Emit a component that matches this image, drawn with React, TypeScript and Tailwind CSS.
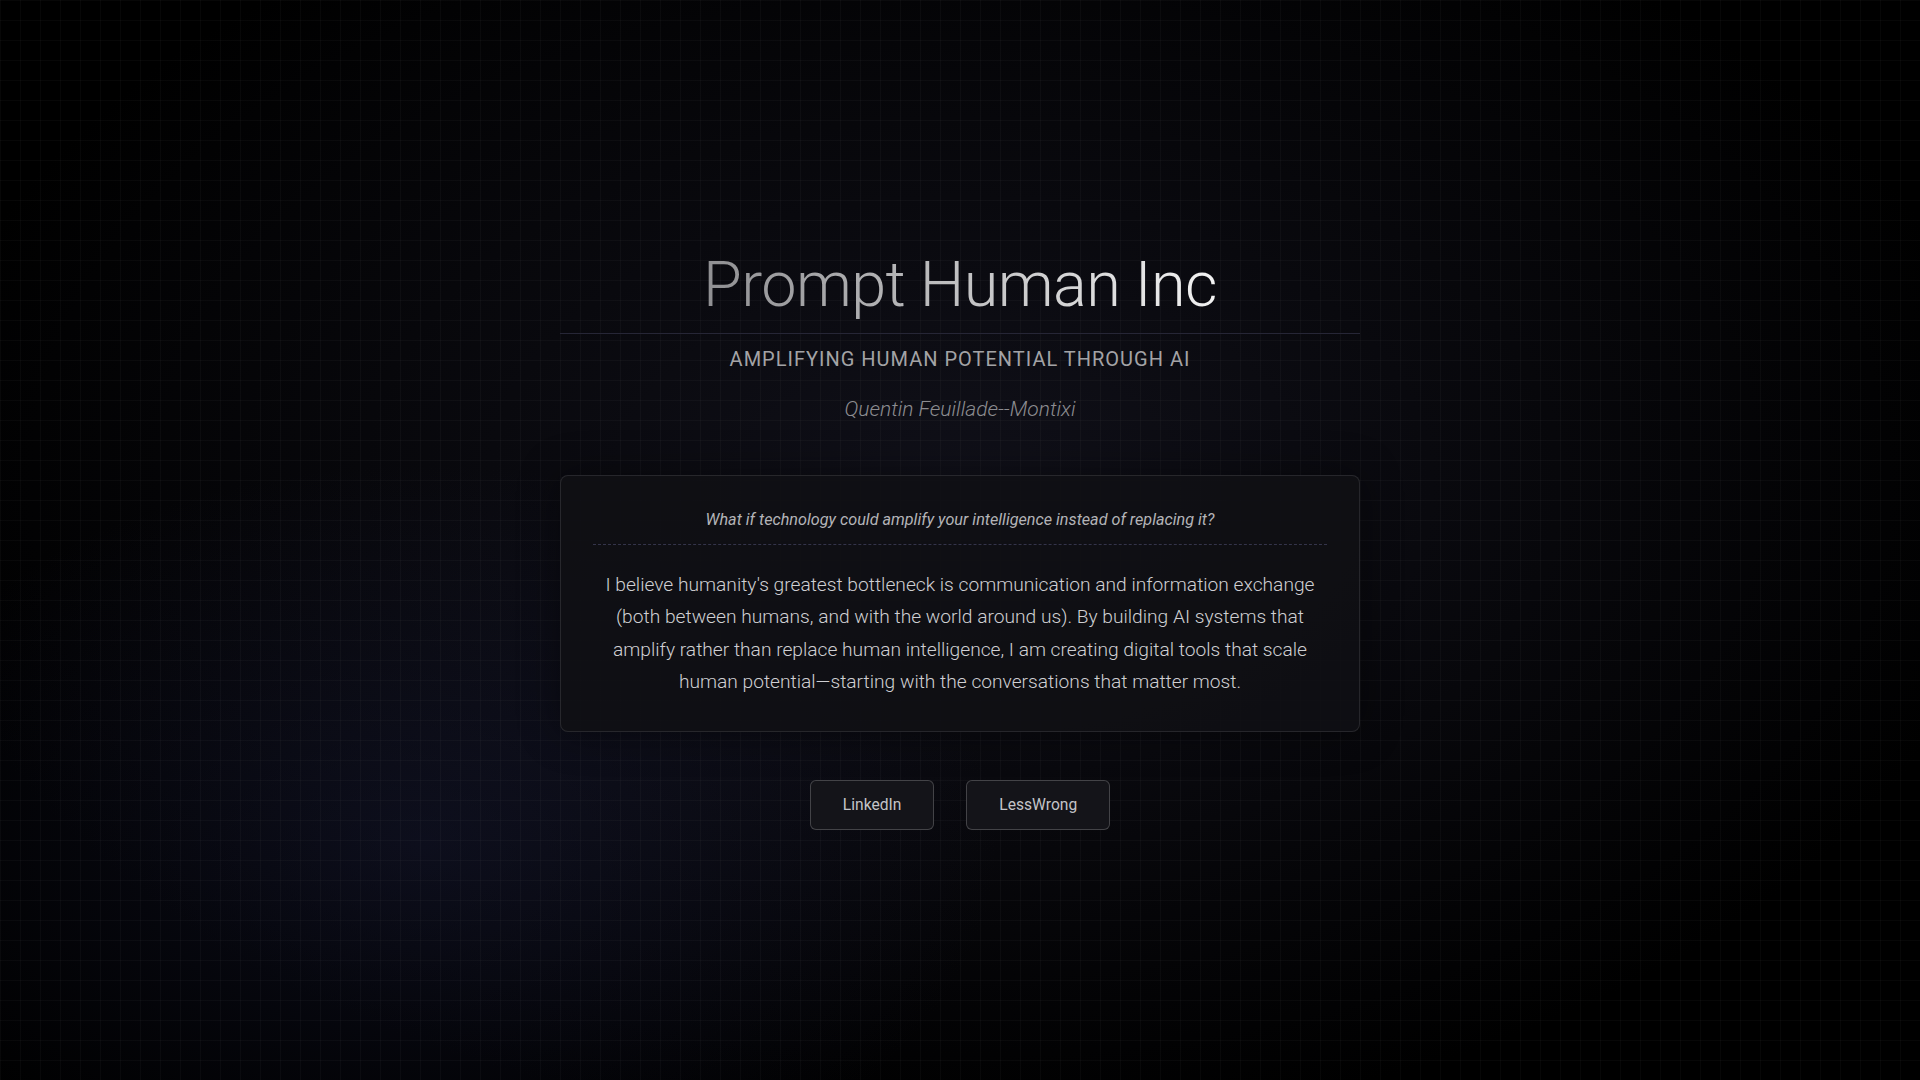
import type { ReactNode } from "react";

const links = [
  { label: "LinkedIn", href: "#" },
  { label: "LessWrong", href: "#" },
];

const LinkButton = ({ href, children }: { href: string; children: ReactNode }) => (
  <a
    href={href}
    className="rounded-md border border-white/20 bg-[#141419] px-8 py-3 text-[15.6px] leading-6 text-[#c4c4c8] hover:bg-[#1c1c22]"
  >
    {children}
  </a>
);

export default function App() {
  return (
    <div
      className="flex min-h-screen w-full flex-col items-center justify-center bg-black font-['Roboto',sans-serif] [background-image:linear-gradient(rgba(255,255,255,0.028)_1px,transparent_1px),linear-gradient(90deg,rgba(255,255,255,0.028)_1px,transparent_1px),radial-gradient(ellipse_30%_35%_at_22%_78%,rgba(30,34,70,0.35),transparent_100%),radial-gradient(ellipse_55%_60%_at_50%_45%,rgba(18,18,28,0.9),transparent_100%)] [background-size:20px_20px,20px_20px,100%_100%,100%_100%]"
    >
      <main className="flex w-[800px] flex-col items-center pb-[3px]">
        <header className="flex w-full flex-col items-center">
          <h1 className="w-full border-b border-[#262636] pb-[10px] text-center text-[63px] font-light leading-[1.2] tracking-[-0.01em]">
            <span className="bg-[linear-gradient(90deg,#8f8f92,#f2f2f2)] bg-clip-text text-transparent">Prompt Human Inc</span>
          </h1>
          <p className="mt-[11px] text-[20px] uppercase leading-7 tracking-[0.05em] text-[#a3a3a6]">
            Amplifying Human Potential Through AI
          </p>
          <p className="mt-[22px] text-[21px] font-light italic leading-7 text-[#8c8c90]">Quentin Feuillade--Montixi</p>
        </header>

        <section className="mt-[52px] w-full rounded-lg border border-white/10 bg-[#0f0f14]/90 px-8 pt-8 pb-8 shadow-[0_0_40px_rgba(0,0,0,0.4)]">
          <p className="border-b border-dashed border-[#34344a] pb-3 text-center text-[16.2px] italic leading-6 text-[#b4b4b8]">
            What if technology could amplify your intelligence instead of replacing it?
          </p>
          <p className="mt-6 px-2 text-center text-[19.2px] font-light leading-[1.7] text-[#cfcfd3]">
            I believe humanity's greatest bottleneck is communication and information exchange (both between humans,
            and with the world around us). By building AI systems that amplify rather than replace human
            intelligence, I am creating digital tools that scale human potential—starting with the conversations
            that matter most.
          </p>
        </section>

        <nav className="mt-12 flex items-center gap-8">
          {links.map((link) => (
            <LinkButton key={link.label} href={link.href}>
              {link.label}
            </LinkButton>
          ))}
        </nav>
      </main>
    </div>
  );
}
